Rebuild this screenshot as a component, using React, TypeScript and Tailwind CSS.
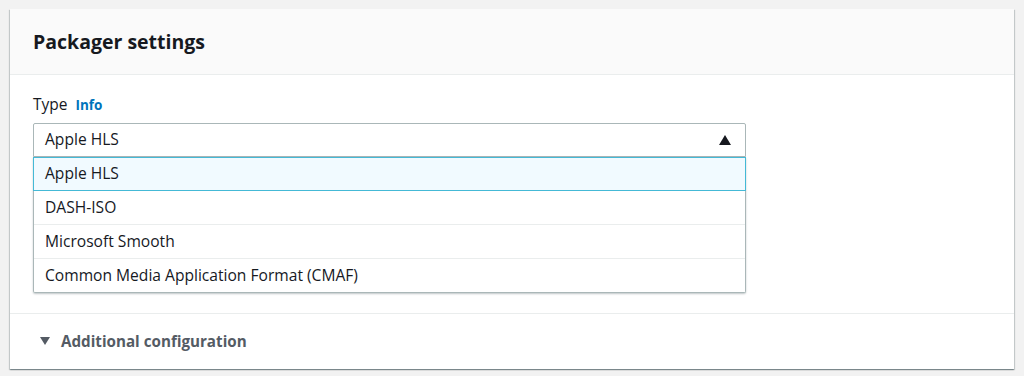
const options = [
    "Apple HLS",
    "DASH-ISO",
    "Microsoft Smooth",
    "Common Media Application Format (CMAF)",
]

const App = () => {
    return (
        <div className="w-[1024px] h-[376px] bg-[#f2f2f2] pt-[9px] px-[10px] overflow-hidden" style={{ fontFamily: '"Open Sans", "Noto Sans", sans-serif' }}>
            <section className="bg-white shadow-[0_1px_1px_0_rgba(0,28,36,0.3),1px_1px_1px_0_rgba(0,28,36,0.15),-1px_1px_1px_0_rgba(0,28,36,0.15)]">

                <div className="h-[66px] flex items-center px-[23px] bg-[#fafafa] border-b border-[#eaeded]">
                    <h2 className="text-[19.5px] font-bold text-[#16191f] leading-none">Packager settings</h2>
                </div>

                <div className="px-[23px] pt-[20px] pb-[20px] border-b border-[#eaeded]">
                    <div className="flex items-center gap-[8px] h-[20px] text-[15.5px] text-[#16191f]">
                        <span>Type</span>
                        <span className="text-[13.5px] font-bold text-[#0073bb]">Info</span>
                    </div>

                    <div className="w-[713px] mt-[8px]">
                        <div className="h-[34px] flex items-center justify-between pl-[11px] pr-[14px] border border-[#aab7b8] rounded-t-[2px] text-[15.6px] text-[#16191f]">
                            <span>Apple HLS</span>
                            <svg width="12" height="10" viewBox="0 0 12 10">
                                <path d="M6 0 L12 10 L0 10 Z" fill="#16191f" />
                            </svg>
                        </div>

                        <ul className="border-x border-b border-[#aab7b8] shadow-[0_1px_2px_rgba(0,28,36,0.25)] rounded-b-[2px] text-[15.6px] text-[#16191f]">
                            {options.map((opt, i) => (
                                <li
                                    key={opt}
                                    className={
                                        i === 0
                                            ? "h-[34px] flex items-center pl-[11px] bg-[#f1faff] border border-[#44b9d6] -mx-px"
                                            : i === 1
                                              ? "h-[33px] flex items-center pl-[11px]"
                                              : "h-[34px] flex items-center pl-[11px] border-t border-[#eaeded]"
                                    }
                                >
                                    {opt}
                                </li>
                            ))}
                        </ul>
                    </div>
                </div>

                <div className="h-[55px] flex items-center gap-[11px] pl-[30px] pb-[1px]">
                    <svg width="10" height="8" viewBox="0 0 10 8">
                        <path d="M0 0 L10 0 L5 8 Z" fill="#545b64" />
                    </svg>
                    <span className="text-[15.2px] font-bold text-[#545b64]">Additional configuration</span>
                </div>

            </section>
        </div>
    )
}

export default App
